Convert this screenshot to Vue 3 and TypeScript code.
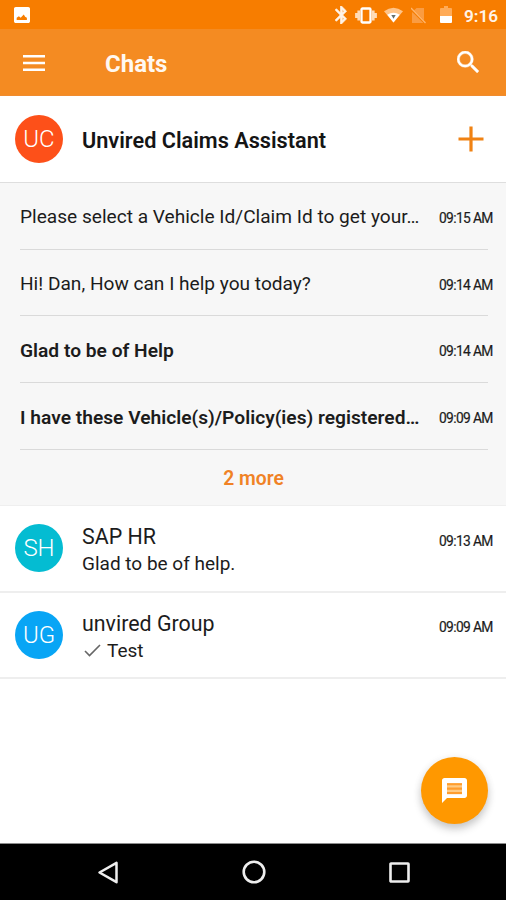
<script setup lang="ts">
interface Message {
  text: string
  time: string
  unread?: boolean
}

interface Chat {
  initials: string
  tone: string
  name: string
  preview: string
  time: string
  sent?: boolean
}

const messages: Message[] = [
  { text: 'Please select a Vehicle Id/Claim Id to get your…', time: '09:15 AM' },
  { text: 'Hi! Dan, How can I help you today?', time: '09:14 AM' },
  { text: 'Glad to be of Help', time: '09:14 AM', unread: true },
  { text: 'I have these Vehicle(s)/Policy(ies) registered…', time: '09:09 AM', unread: true },
]

const chats: Chat[] = [
  { initials: 'SH', tone: 'cyan', name: 'SAP HR', preview: 'Glad to be of help.', time: '09:13 AM' },
  { initials: 'UG', tone: 'blue', name: 'unvired Group', preview: 'Test', time: '09:09 AM', sent: true },
]
</script>

<template>
  <div class="screen">
    <div class="status">
      <svg class="picture" viewBox="3 3 18 18" fill="#fff">
        <path d="M21 19V5c0-1.100-.9-2-2-2H5c-1.100 0-2 .9-2 2v14c0 1.100.9 2 2 2h14c1.100 0 2-.9 2-2zM6 17.500v-2.500l2.500-1.500 2 1.500 3.500-3.500 1.500 2.500 2 1v2.500z" />
      </svg>
      <svg class="bluetooth" viewBox="5 2 13 20" fill="#fff4e8" stroke="#fff4e8" stroke-width=".8">
        <path d="M17.710 7.710L12 2h-1v7.590L6.410 5 5 6.410 10.590 12 5 17.590 6.410 19 11 14.410V22h1l5.710-5.710-4.300-4.290 4.300-4.290zM13 5.830l1.880 1.880L13 9.590V5.830zm1.880 10.460L13 18.170v-3.760l1.880 1.880z" />
      </svg>
      <svg class="vibrate" viewBox="0 0 22 17">
        <path d="M3.700 3.500v10M18.300 3.500v10M1.400 6v5M20.600 6v5" stroke="#ffdcb8" stroke-width="2.600" />
        <rect x="6.500" y="1.500" width="9" height="14" rx="1" fill="none" stroke="#fff" stroke-width="2.300" />
      </svg>
      <svg class="wifi" viewBox="0 0 20 16">
        <path d="M0 4Q10-3.500 20 4L10 16z" fill="#ffc488" />
        <path d="M3.400 7.700Q10 3.300 16.600 7.700L10 16z" fill="#fff" />
        <path d="M7.700 8h4.600L10 12z" fill="#66706c" />
      </svg>
      <svg class="sim" viewBox="0 0 15 17">
        <path d="M5.500 1H13v15H1V5.500z" fill="#fa9c42" />
        <path d="M0 2l14 14" stroke="#f57c00" stroke-width="2.400" />
        <path d="M0 1l14.500 15" stroke="#ffb66d" stroke-width="1.300" />
      </svg>
      <svg class="battery" viewBox="0 0 12 18">
        <path d="M4 0h4v2h3q1 0 1 1v7H0V3q0-1 1-1h3z" fill="#ffab57" />
        <path d="M0 10h12v6q0 1-1 1H1q-1 0-1-1z" fill="#fff" />
      </svg>
      <span class="clock">9:16</span>
    </div>

    <header class="bar">
      <svg class="menu" viewBox="0 0 22 16">
        <path d="M0 1.300h22M0 8h22M0 14.700h22" stroke="#fff" stroke-width="2.600" />
      </svg>
      <h1>Chats</h1>
      <svg class="search" viewBox="3 3 17.500 17.500" fill="#fff" stroke="#fff" stroke-width=".3">
        <path d="M15.500 14h-.79l-.28-.27A6.471 6.471 0 0 0 16 9.500 6.500 6.500 0 1 0 9.500 16c1.610 0 3.090-.59 4.230-1.570l.27.28v.79l5 4.990L20.490 19l-4.990-5zm-6 0C7.010 14 5 11.990 5 9.500S7.010 5 9.500 5 14 7.010 14 9.500 11.990 14 9.500 14z" />
      </svg>
    </header>

    <section class="group">
      <span class="avatar red">UC</span>
      <h2>Unvired Claims Assistant</h2>
      <svg class="plus" viewBox="0 0 26 26">
        <path d="M13 .5v25M.5 13h25" stroke="#f08213" stroke-width="3.200" />
      </svg>
    </section>

    <section class="thread">
      <div v-for="m in messages" :key="m.text" class="message" :class="{ unread: m.unread }">
        <span class="text">{{ m.text }}</span>
        <time>{{ m.time }}</time>
      </div>
      <div class="more">2 more</div>
    </section>

    <section v-for="c in chats" :key="c.name" class="chat">
      <span class="avatar" :class="c.tone">{{ c.initials }}</span>
      <div class="body">
        <div class="name">{{ c.name }}</div>
        <div class="preview">
          <svg v-if="c.sent" class="check" viewBox="0 0 17 13">
            <path d="M1 7l4.500 4.500L16 1" fill="none" stroke="#666" stroke-width="1.600" />
          </svg>
          <span>{{ c.preview }}</span>
        </div>
      </div>
      <time>{{ c.time }}</time>
    </section>

    <main class="rest">
      <button class="fab" aria-label="New chat">
        <svg viewBox="2 2 20 20">
          <path d="M20 2H4c-1.100 0-2 .9-2 2v18l4-4h14c1.100 0 2-.9 2-2V4c0-1.100-.9-2-2-2z" fill="#fff" />
          <path d="M6 6h12v9H6z" fill="#ffcb83" />
          <path d="M6 7h12M6 10.500h12M6 14h12" stroke="#ff9d2e" stroke-width="1.700" />
        </svg>
      </button>
    </main>

    <nav class="nav">
      <svg class="back" viewBox="0 0 20 23">
        <path d="M18.500 1.800v19.400L1.500 11.500z" fill="none" stroke="#eee" stroke-width="2.500" stroke-linejoin="round" />
      </svg>
      <svg class="home" viewBox="0 0 24 24">
        <circle cx="12" cy="12" r="10.300" fill="none" stroke="#eee" stroke-width="2.600" />
      </svg>
      <svg class="recent" viewBox="0 0 21 21">
        <rect x="1.500" y="1.500" width="18" height="18" rx=".5" fill="none" stroke="#eee" stroke-width="2.600" />
      </svg>
    </nav>
  </div>
</template>

<style>
body {
  margin: 0;
}
</style>

<style scoped>
.screen {
  width: 506px;
  height: 900px;
  display: flex;
  flex-direction: column;
  overflow: hidden;
  background: #fff;
  color: #1c1c1c;
  font-family: Roboto, "Liberation Sans", sans-serif;
}
.screen * {
  box-sizing: border-box;
}
svg {
  display: block;
  flex: none;
}
h1, h2 {
  margin: 0;
}
.status {
  flex: none;
  height: 29px;
  display: flex;
  align-items: center;
  padding: 1px 9px 0 14px;
  background: #f77d00;
}
.picture { width: 16px; height: 16px; margin-right: auto; }
.bluetooth { width: 12px; height: 18px; margin-right: 8px; }
.vibrate { width: 22px; height: 17px; margin-right: 7px; }
.wifi { width: 19px; height: 16px; margin-right: 8px; }
.sim { width: 15px; height: 17px; margin-right: 14px; }
.battery { width: 12px; height: 18px; margin-right: 12px; }
.clock {
  width: 33px;
  margin-top: 2px;
  white-space: nowrap;
  font-size: 17.200px;
  font-weight: 600;
  line-height: 26px;
  color: #fff4e8;
}
.bar {
  flex: none;
  height: 67px;
  display: flex;
  align-items: center;
  padding: 0 27px 0 23px;
  background: #f48b22;
  border-bottom: 1px solid #ef8c30;
}
.menu { width: 22px; height: 16px; margin-top: 1px; }
h1 {
  margin: 4px auto 0 60px;
  font-size: 24px;
  line-height: 30px;
  font-weight: 700;
  color: #fff8f0;
}
.search { width: 22px; height: 22px; margin-bottom: 1px; }
.group {
  flex: none;
  height: 87px;
  display: flex;
  align-items: center;
  padding: 0 22px 0 15px;
  border-bottom: 1px solid #dedede;
}
.avatar {
  flex: none;
  width: 48px;
  height: 48px;
  border-radius: 50%;
  text-align: center;
  line-height: 49px;
  font-size: 24px;
  font-weight: 300;
  color: #fff;
}
.red { background: #fd5019; }
.cyan { background: #04bcd2; }
.blue { background: #08a5f5; }
h2 {
  flex: 1;
  margin: 4px 0 0 19px;
  font-size: 21.700px;
  line-height: 28px;
  font-weight: 600;
  color: #151515;
}
.plus { width: 26px; height: 26px; }
.thread {
  flex: none;
  height: 323px;
  display: flex;
  flex-direction: column;
  background: #f7f7f7;
}
.message {
  flex: none;
  height: 66.700px;
  display: flex;
  align-items: center;
  justify-content: space-between;
  margin: 0 18px 0 20px;
  border-bottom: 1.500px solid #dadada;
}
.text {
  font-size: 19.100px;
  line-height: 26px;
  white-space: nowrap;
  margin-top: 3px;
}
.unread .text {
  font-size: 19.200px;
  font-weight: 600;
  margin-top: 4px;
}
time {
  flex: none;
  width: 54px;
  margin-right: -5px;
  margin-top: 4px;
  white-space: nowrap;
  font-size: 13.800px;
  line-height: 18px;
  letter-spacing: -.65px;
  -webkit-text-stroke: .2px currentColor;
}
.more {
  flex: 1;
  display: grid;
  place-items: center;
  padding: 3px 0 0 1px;
  font-size: 19.300px;
  font-weight: 600;
  color: #f08225;
  border-bottom: 1px solid #efefef;
}
.chat {
  flex: none;
  height: 86.500px;
  display: flex;
  align-items: center;
  padding: 0 18px 0 15px;
  border-bottom: 2px solid #eee;
}
.chat time { margin: 0 -5px 15px 0; }
.body { flex: 1; margin: 4px 0 0 19px; }
.name { font-size: 21.400px; line-height: 28px; }
.preview {
  display: flex;
  align-items: center;
  font-size: 19px;
  line-height: 26px;
}
.check { width: 17px; height: 13px; margin: 0 6px 0 2px; }
.rest {
  flex: 1;
  display: flex;
  align-items: flex-end;
  justify-content: flex-end;
  padding: 0 18px 19px 0;
}
.fab {
  width: 67px;
  height: 67px;
  padding: 0;
  border: 0;
  border-radius: 50%;
  display: grid;
  place-items: center;
  background: #ff9800;
  box-shadow: 0 5px 8px rgba(0, 0, 0, .2), 0 1px 10px rgba(0, 0, 0, .06);
}
.fab svg { width: 25px; height: 25px; }
.nav {
  flex: none;
  height: 57px;
  display: flex;
  align-items: center;
  padding: 0 96px 0 98px;
  justify-content: space-between;
  background: #000;
  border-top: 1px solid #8c8c8c;
}
.back { width: 20px; height: 23px; }
.home { width: 24px; height: 24px; }
.recent { width: 21px; height: 21px; }
</style>
